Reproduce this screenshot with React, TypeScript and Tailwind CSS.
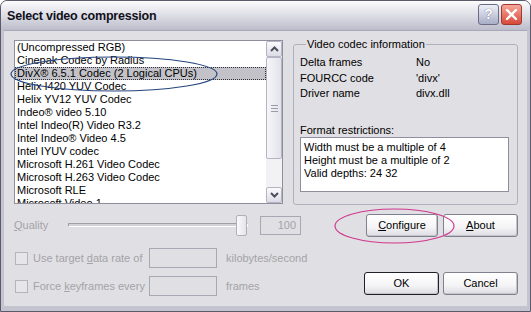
const codecs = [
  "(Uncompressed RGB)",
  "Cinepak Codec by Radius",
  "DivX® 6.5.1 Codec (2 Logical CPUs)",
  "Helix I420 YUV Codec",
  "Helix YV12 YUV Codec",
  "Indeo® video 5.10",
  "Intel Indeo(R) Video R3.2",
  "Intel Indeo® Video 4.5",
  "Intel IYUV codec",
  "Microsoft H.261 Video Codec",
  "Microsoft H.263 Video Codec",
  "Microsoft RLE",
  "Microsoft Video 1",
];

function Chevron({ up }: { up?: boolean }) {
  return (
    <svg width="9" height="6" viewBox="0 0 9 6">
      <path
        d={up ? "M1 5 L4.5 1.5 L8 5" : "M1 1 L4.5 4.5 L8 1"}
        fill="none"
        stroke="#4d4d5c"
        strokeWidth="2"
      />
    </svg>
  );
}

function ScrollBtn({ up }: { up?: boolean }) {
  return (
    <div className="h-[16px] w-full rounded-[2px] border border-[#b4b4c4] bg-[linear-gradient(to_bottom,#fbfbfd,#dcdce6)] flex items-center justify-center">
      <Chevron up={up} />
    </div>
  );
}

function XpButton({
  children,
  def,
  className = "",
}: {
  children: React.ReactNode;
  def?: boolean;
  className?: string;
}) {
  return (
    <div
      className={`flex items-center justify-center rounded-[3px] border text-[11px] text-black bg-[linear-gradient(to_bottom,#ffffff_0%,#f4f4f6_60%,#dcdce2_100%)] shadow-[inset_-1px_-1px_0_#c4c4cc] ${
        def ? "border-[#202028] border-[1.5px]" : "border-[#80808e]"
      } ${className}`}
    >
      {children}
    </div>
  );
}

export default function App() {
  return (
    <div className="relative w-[531px] h-[312px] font-['Liberation_Sans',Arial,sans-serif] text-[11px] text-black bg-[#c4c4d0] border border-[#5a5a6a] rounded-t-[7px] flex flex-col overflow-hidden">
      {/* Title bar */}
      <div className="h-[29px] flex items-center justify-between pl-[6px] pr-[8px] bg-[linear-gradient(to_bottom,#fdfdfe_0%,#ececf1_25%,#d4d4de_65%,#bcbccb_100%)]">
        <span className="font-bold text-[12.5px] tracking-[-0.2px] text-[#10101a] mt-[1px]">
          Select video compression
        </span>
        <div className="flex gap-[2px] mb-[3px]">
          <div className="w-[21px] h-[21px] rounded-[3px] border border-[#6c6c84] bg-[linear-gradient(to_bottom,#eef0f8,#a9adc6)] flex items-center justify-center font-bold text-[14px] text-white [text-shadow:0_0_1px_#404060]">
            ?
          </div>
          <div className="w-[21px] h-[21px] rounded-[3px] border border-[#a03a30] bg-[linear-gradient(to_bottom,#f4a89a,#d9483a)] flex items-center justify-center">
            <svg width="13" height="13" viewBox="0 0 13 13">
              <path d="M2 2 L11 11 M11 2 L2 11" stroke="white" strokeWidth="2.4" strokeLinecap="round" />
            </svg>
          </div>
        </div>
      </div>

      {/* Client area */}
      <div className="mx-[3px] mb-[5px] h-[276px] bg-[#e0dfe3] border-t border-[#a8a8b8] pl-[10px] pr-[9px]">
        {/* Row 1: list + info group */}
        <div className="flex items-start pt-[6px]">
          <div className="mt-[3px] w-[269px] h-[164px] border border-[#8e8e9c] bg-white flex">
            <div className="flex-1 overflow-hidden">
              {codecs.map((c, i) => (
                <div
                  key={c}
                  className={`h-[13px] leading-[13px] pl-[2px] whitespace-nowrap ${
                    i === 2 ? "bg-[#c2c2c8] outline-1 outline-dotted outline-[#303038] -outline-offset-1" : ""
                  }`}
                >
                  {c}
                </div>
              ))}
            </div>
            <div className="w-[16px] bg-[#f2f2f5] flex flex-col">
              <ScrollBtn up />
              <div className="flex-1 flex flex-col">
                <div className="h-[102px] rounded-[2px] border border-[#b4b4c4] bg-[linear-gradient(to_right,#f6f6f9,#e2e2ea)] flex flex-col items-center justify-center gap-[2px]">
                  <div className="w-[7px] h-[1px] bg-[#9a9aaa]" />
                  <div className="w-[7px] h-[1px] bg-[#9a9aaa]" />
                  <div className="w-[7px] h-[1px] bg-[#9a9aaa]" />
                </div>
              </div>
              <ScrollBtn />
            </div>
          </div>

          <fieldset className="ml-[10px] w-[225px] h-[168px] border border-[#b0b0bc] rounded-[3px] px-[6px] pb-[6px]">
            <legend className="ml-[6px] px-[1px] leading-[14px]">Video codec information</legend>
            <div className="mt-[4px] flex flex-col">
              {[
                ["Delta frames", "No"],
                ["FOURCC code", "'divx'"],
                ["Driver name", "divx.dll"],
              ].map(([k, v]) => (
                <div key={k} className="flex h-[15.5px] leading-[15px]">
                  <span className="w-[116px]">{k}</span>
                  <span>{v}</span>
                </div>
              ))}
            </div>
            <div className="mt-[22px] leading-[12px]">Format restrictions:</div>
            <div className="mt-[1px] w-[209px] h-[55px] border border-[#8e8e9c] bg-white px-[3px] pt-[3px] leading-[13px]">
              <div>Width must be a multiple of 4</div>
              <div>Height must be a multiple of 2</div>
              <div>Valid depths: 24 32</div>
            </div>
          </fieldset>
        </div>

        {/* Row 2: quality + configure/about */}
        <div className="mt-[8px] h-[24px] flex items-center">
          <span className="w-[54px] text-[#a4a3a8]">
            <span className="underline">Q</span>uality
          </span>
          <div className="w-[180px] h-[22px] flex items-center">
            <div className="w-full h-[4px] border-t border-l border-[#a0a0a8] border-b border-r border-b-white border-r-white bg-[#d4d4d8]" />
          </div>
          <div className="-ml-[12px] w-[11px] h-[21px] rounded-[2px] border border-[#b0b0bc] bg-[linear-gradient(to_right,#fafafc,#e4e4ea)]" />
          <div className="ml-[13px] w-[41px] h-[19px] border border-[#a8a8b4] text-right pr-[4px] leading-[17px] text-[#a4a3a8]">
            100
          </div>
          <XpButton className="ml-[65px] w-[72px] h-[23px]">
            <span>
              <span className="underline">C</span>onfigure
            </span>
          </XpButton>
          <XpButton className="ml-[5px] w-[75px] h-[23px]">
            <span>
              <span className="underline">A</span>bout
            </span>
          </XpButton>
        </div>

        {/* Row 3: checkboxes + OK/Cancel */}
        <div className="mt-[11px] flex items-end">
          <div className="flex flex-col gap-[8px] text-[#a4a3a8]">
            <div className="flex items-center h-[20px]">
              <div className="ml-[1px] w-[13px] h-[13px] border border-[#b4b4bc] bg-[#e6e6ea]" />
              <span className="ml-[5px] w-[116px] whitespace-nowrap">
                Use target <span className="underline">d</span>ata rate of
              </span>
              <div className="w-[68px] h-[20px] border border-[#a8a8b4]" />
              <span className="ml-[9px] whitespace-nowrap">kilobytes/second</span>
            </div>
            <div className="flex items-center h-[20px]">
              <div className="ml-[1px] w-[13px] h-[13px] border border-[#b4b4bc] bg-[#e6e6ea]" />
              <span className="ml-[5px] w-[116px] whitespace-nowrap">
                Force <span className="underline">k</span>eyframes every
              </span>
              <div className="w-[68px] h-[20px] border border-[#a8a8b4]" />
              <span className="ml-[9px]">frames</span>
            </div>
          </div>
          <div className="ml-auto mb-[1px] flex gap-[4px]">
            <XpButton def className="w-[75px] h-[23px]">OK</XpButton>
            <XpButton className="w-[75px] h-[23px]">Cancel</XpButton>
          </div>
        </div>
      </div>

      {/* Annotation ellipses drawn over the dialog */}
      <svg className="absolute left-[-1px] top-[-1px] pointer-events-none" width="531" height="312">
        <ellipse cx="114" cy="74" rx="103" ry="17" fill="none" stroke="#24447e" strokeWidth="1.2" />
        <ellipse cx="394.5" cy="226" rx="59.5" ry="17" fill="none" stroke="#d0388e" strokeWidth="1.2" />
      </svg>
    </div>
  );
}
